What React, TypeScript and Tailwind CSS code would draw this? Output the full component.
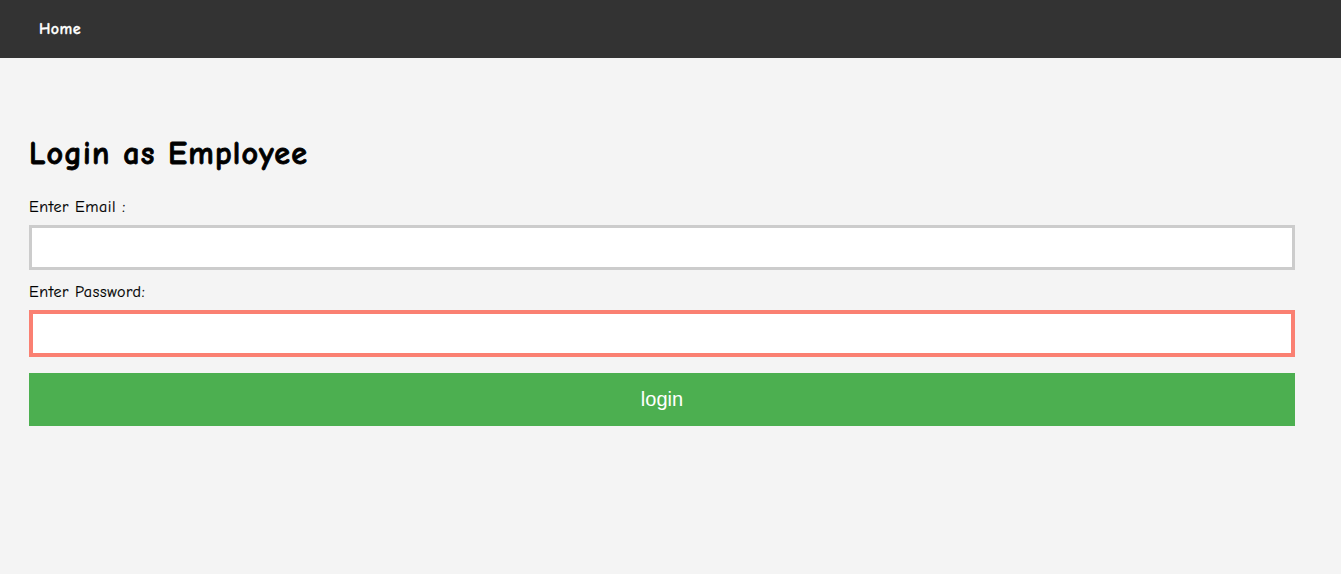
export default function App() {
  const font = { fontFamily: '"Comic Sans MS", "Comic Neue", cursive' };
  return (
    <div className="min-h-[574px] bg-[#f4f4f4]" style={font}>
      <nav className="h-[58px] bg-[#333333] flex items-center px-[39px]">
        <a className="text-white font-bold text-[16px] tracking-[0.4px] [-webkit-text-stroke:0.3px_white]">Home</a>
      </nav>

      <main className="px-[29px] pt-[76px]">
        <h1 className="text-[32px] font-bold text-black leading-[40px] mb-[24px] tracking-[1.2px] [-webkit-text-stroke:0.8px_black]">
          Login as Employee
        </h1>
        <form className="w-[1266px] flex flex-col" onSubmit={(e) => e.preventDefault()}>
          <label className="text-[16px] text-black leading-[18px] mb-[9px] tracking-[0.6px] [-webkit-text-stroke:0.2px_black]">
            Enter Email :
          </label>
          <input
            type="email"
            className="h-[45px] bg-white border-[3px] border-[#cccccc] outline-none px-2 mb-[13px]"
          />
          <label className="text-[16px] text-black leading-[18px] mb-[9px] tracking-[0.6px] [-webkit-text-stroke:0.2px_black]">
            Enter Password:
          </label>
          <input
            type="password"
            className="h-[47px] bg-white border-[4px] border-[#fa8072] outline-none px-2 mb-[16px]"
          />
          <button
            type="submit"
            className="h-[53px] bg-[#4caf50] text-white text-[20px] leading-[24px] pb-[2px]"
            style={{ fontFamily: '"Liberation Sans", Arial, sans-serif' }}
          >
            login
          </button>
        </form>
      </main>
    </div>
  );
}
